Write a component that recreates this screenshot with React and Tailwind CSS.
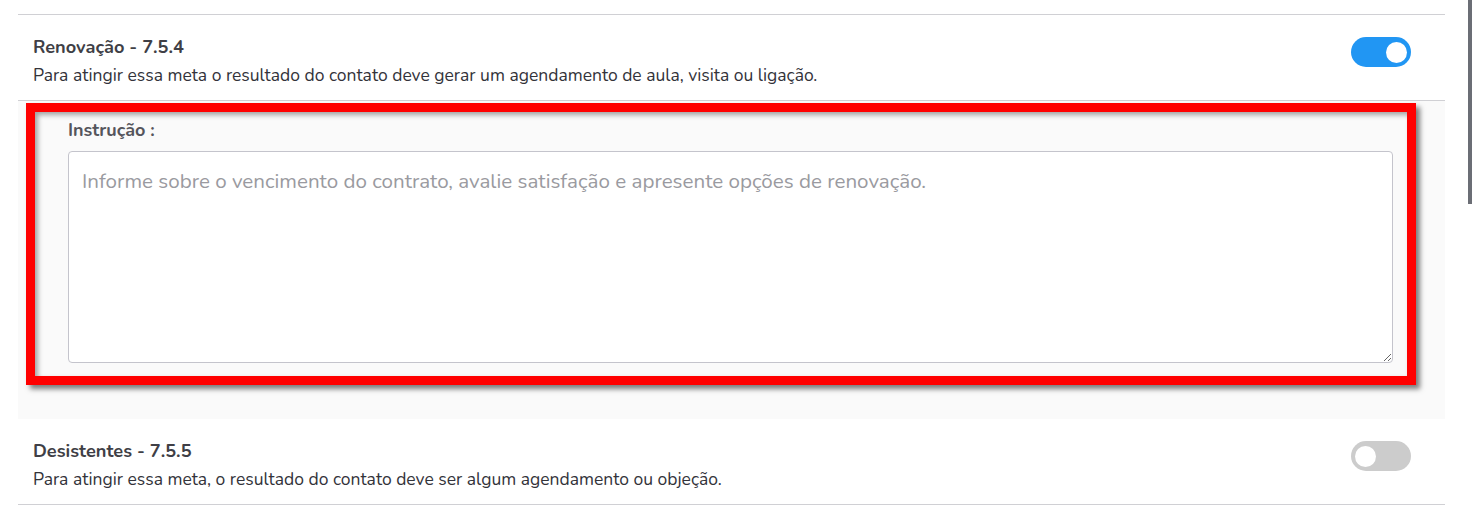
import React from "react";

const font = { fontFamily: "Nunito, 'Noto Sans', 'Open Sans', sans-serif" };

function Toggle({ on }) {
  return (
    <div
      className={`w-[60px] h-[30px] rounded-full flex items-center px-[4px] ${
        on ? "bg-[#2196f3] justify-end" : "bg-[#cccccc] justify-start"
      }`}
    >
      <div className="w-[21px] h-[21px] rounded-full bg-white" />
    </div>
  );
}

function GoalRow({ title, description, on }) {
  return (
    <div className="flex items-start justify-between pl-[15px] pr-[34px] pt-[20px] pb-[13px]">
      <div>
        <div className="text-[18.2px] leading-[24px] font-bold text-[#3f3f46]">{title}</div>
        <div className="mt-[4px] text-[17.5px] leading-[24px] text-[#33333a]">{description}</div>
      </div>
      <div className="pt-[2px]">
        <Toggle on={on} />
      </div>
    </div>
  );
}

export default function App() {
  return (
    <div className="relative w-[1473px] h-[519px] bg-white overflow-hidden" style={font}>
      <div className="pt-[14px] pl-[18px] w-[1445px]">
        <div className="border-t border-[#d0d0d4]">
          <GoalRow
            title="Renovação - 7.5.4"
            description="Para atingir essa meta o resultado do contato deve gerar um agendamento de aula, visita ou ligação."
            on
          />
        </div>
        <div className="relative border-t border-[#d0d0d4] bg-[#fafafa] pl-[50px] pr-[52px] pt-[19px] pb-[56px]">
          <label className="block text-[18px] leading-[20px] font-bold text-[#55555c]">
            Instrução :
          </label>
          <textarea
            className="mt-[11px] block w-full h-[212px] rounded-[4px] border border-[#c4c4cc] bg-white px-[13px] pt-[15px] text-[20.6px] leading-[28px] text-[#333] placeholder:text-[#9a9aa0] outline-none"
            style={font}
            placeholder="Informe sobre o vencimento do contrato, avalie satisfação e apresente opções de renovação."
          />
          <div className="absolute left-[8px] top-[2px] w-[1390px] h-[282px] border-[9px] border-[#ff0000] shadow-[4px_4px_5px_rgba(0,0,0,0.5),inset_3px_3px_5px_rgba(0,0,0,0.35)] pointer-events-none" />
        </div>
        <div className="border-b border-[#d0d0d4]">
          <GoalRow
            title="Desistentes - 7.5.5"
            description="Para atingir essa meta, o resultado do contato deve ser algum agendamento ou objeção."
          />
        </div>
      </div>
      <div className="absolute right-[1px] top-0 w-[4px] h-[204px] bg-[#6b6e75]" />
    </div>
  );
}
